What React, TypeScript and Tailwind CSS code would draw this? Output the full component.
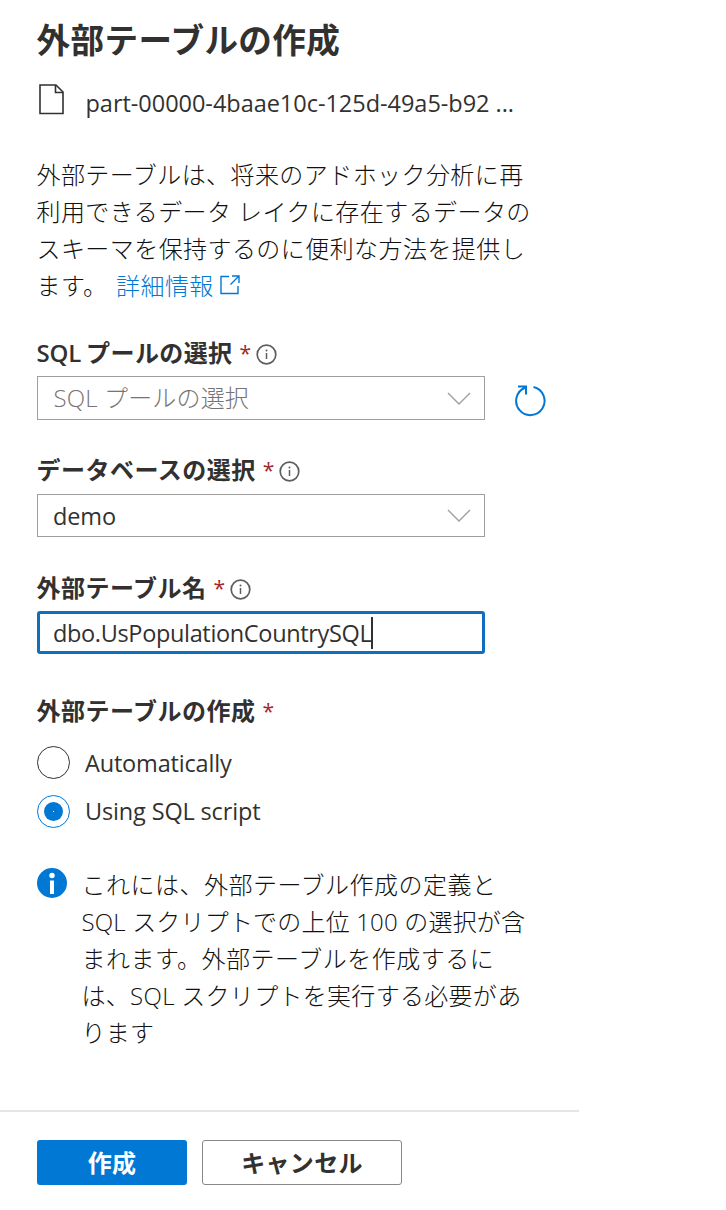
import type { ReactNode } from "react";

const infoLines: { text: string; spacing: string }[] = [
  { text: "これには、外部テーブル作成の定義と", spacing: "tracking-[0.5px]" },
  { text: "SQL スクリプトでの上位 100 の選択が含", spacing: "tracking-[0.18px]" },
  { text: "まれます。外部テーブルを作成するに", spacing: "tracking-[0.5px]" },
  { text: "は、SQL スクリプトを実行する必要があ", spacing: "tracking-[0.3px]" },
  { text: "ります", spacing: "tracking-[0.3px]" },
];

function InfoIcon() {
  return (
    <svg className="mt-[3px] ml-[5px] h-[21px] w-[21px] shrink-0" viewBox="0 0 21 21" fill="none">
      <circle cx="10.5" cy="10.5" r="9.3" stroke="#605e5c" strokeWidth="1.7" />
      <path d="M10.5 9v6" stroke="#605e5c" strokeWidth="1.5" />
      <circle cx="10.5" cy="6.5" r="1" fill="#605e5c" />
    </svg>
  );
}

function Label({ children, info = true }: { children: ReactNode; info?: boolean }) {
  return (
    <div className="flex h-8 items-center whitespace-nowrap text-[24px] leading-8 font-semibold tracking-[0.48px] text-[#323130]">
      <span>{children}</span>
      <span className="-mt-px ml-[7px] text-[21px] font-normal tracking-normal text-[#a4262c]">*</span>
      {info && <InfoIcon />}
    </div>
  );
}

function Chevron() {
  return (
    <svg className="mr-[13px] h-[13px] w-[24px]" viewBox="0 0 24 13" fill="none">
      <path d="M1 1l11 11L23 1" stroke="#a19f9d" strokeWidth="1.4" />
    </svg>
  );
}

export default function App() {
  return (
    <main className="h-[1210px] w-[726px] overflow-hidden bg-white font-['Open_Sans','Noto_Sans_CJK_JP',sans-serif] text-[24px] text-[#323130]">
      <div className="h-[1110px] w-[579px] pl-[36.5px]">
        <h1 className="h-[84px] pt-[15px] text-[33.6px] leading-[50px] font-bold tracking-[0.4px] whitespace-nowrap">外部テーブルの作成</h1>
        <div className="flex h-[72px]">
          <svg className="ml-[2px] h-[31px] w-[26px]" viewBox="0 0 26 31" fill="none" stroke="#323130" strokeWidth="1.6">
            <path d="M1 1h16l7 7v21.5H1z" />
            <path d="M16.5 1v7.5H24" />
          </svg>
          <span className="-mt-px ml-[21px] h-10 whitespace-nowrap text-[23.5px] leading-10 tracking-[-0.03px]">part-00000-4baae10c-125d-49a5-b92 ...</span>
        </div>
        <p className="h-[181px] whitespace-nowrap leading-[37px] font-light tracking-[0.43px] text-[#111]">
          外部テーブルは、将来のアドホック分析に再<br />
          利用できるデータ レイクに存在するデータの<br />
          スキーマを保持するのに便利な方法を提供し<br />
          ます。 <a className="ml-[2px] text-[#0078d4]">詳細情報
            <svg className="ml-[6px] inline-block h-[20px] w-[20px] align-[0px]" viewBox="0 0 20 20" fill="none" stroke="#0078d4" strokeWidth="1.4">
              <path d="M9 1.5H1v17h17V11M12 1h7v7M19 1l-8.5 8.5" />
            </svg>
          </a>
        </p>

        <div className="h-[117px]">
          <Label><span className="tracking-[-0.2px]">SQL </span><span className="-ml-px tracking-[0.4px]">プールの選択</span></Label>
          <div className="mt-[7px] ml-[0.5px] flex items-start">
            <div className="flex h-[44px] w-[448px] items-center justify-between border border-[#a19f9d] pl-[15.5px] font-light text-[#767472]">
              <span className="tracking-[0.15px]">SQL プールの選択</span>
              <Chevron />
            </div>
            <svg className="mt-[8px] ml-[29px] h-[33px] w-[33px]" viewBox="0 0 33 33" fill="none" stroke="#0078d4" strokeWidth="2">
              <path d="M19.5 3.1A14.2 14.2 0 1 1 11 3.8M4 2.5h8v8" />
            </svg>
          </div>
        </div>

        <div className="h-[118px]">
          <Label>データベースの選択</Label>
          <div className="mt-[8px] ml-[0.5px] flex h-[43px] w-[448px] items-center justify-between border border-[#a19f9d] pl-[15px] text-[23.5px]">
            <span className="pt-[3px] tracking-[-0.15px]">demo</span>
            <Chevron />
          </div>
        </div>

        <div className="h-[123px]">
          <Label>外部テーブル名</Label>
          <div className="mt-[7px] ml-[0.5px] flex h-[43px] w-[448px] items-center rounded-[3px] border-[3px] border-[#106ebe] pl-[13px] text-[23.5px]">
            <span className="pt-[3px] tracking-[-0.34px]">dbo.UsPopulationCountrySQL</span>
            <span className="h-8 w-[2px] bg-[#323130]" />
          </div>
        </div>

        <Label info={false}>外部テーブルの作成</Label>
        <div className="mt-[19px] ml-[0.5px] flex h-[33px] items-center">
          <span className="h-[33px] w-[33px] rounded-full border border-[#323130]" />
          <span className="ml-[15px] pt-[2px] text-[23.5px] tracking-[-0.18px]">Automatically</span>
        </div>
        <div className="mt-[15px] ml-[0.5px] flex h-[34px] items-center">
          <span className="flex h-[33px] w-[33px] items-center justify-center rounded-full border border-[#0078d4]">
            <span className="flex h-[19px] w-[19px] items-center justify-center rounded-full bg-[#0078d4]"><span className="h-px w-px bg-white" /></span>
          </span>
          <span className="ml-[15px] pt-[2px] text-[23.5px] tracking-[-0.15px]">Using SQL script</span>
        </div>

        <div className="mt-[38px] flex">
          <svg className="mt-[2px] ml-[0.5px] h-[30px] w-[30px] shrink-0" viewBox="0 0 30 30">
            <circle cx="15" cy="15" r="15" fill="#0078d4" />
            <circle cx="15" cy="7.5" r="2.7" fill="#fff" />
            <path d="M13 12.5h4V26h-4z" fill="#fff" />
          </svg>
          <div className="ml-[14.5px] font-light whitespace-nowrap text-[#111]">
            {infoLines.map((line) => (
              <div key={line.text} className={`h-[37px] leading-[37px] ${line.spacing}`}>{line.text}</div>
            ))}
          </div>
        </div>
      </div>

      <footer className="h-[100px] w-[579px] border-t-2 border-[#e5e5e5] pt-[28px] pl-[37px]">
        <div className="flex gap-[15px] font-semibold tracking-[0.3px]">
          <button className="h-[45px] w-[150px] rounded-[3px] bg-[#0078d4] text-white">作成</button>
          <button className="h-[45px] w-[200px] rounded-[3px] border border-[#8a8886]">キャンセル</button>
        </div>
      </footer>
    </main>
  );
}
